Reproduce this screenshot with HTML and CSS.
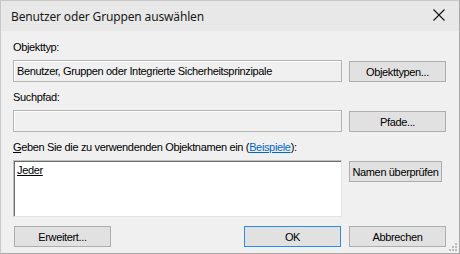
FILE: index.html
```html
<!DOCTYPE html>
<html lang="de">
<head>
    <meta charset="UTF-8">
    <title>Benutzer oder Gruppen auswählen</title>
    <link rel="stylesheet" href="styles.css">
</head>
<body>
    <div class="window">
        <div class="titlebar">
            <span class="title">Benutzer oder Gruppen auswählen</span>
            <button class="close" aria-label="Schließen">
                <svg width="12" height="12" viewBox="0 0 12 12"><path d="M0.5 0.5 L11.5 11.5 M11.5 0.5 L0.5 11.5" stroke="#111" stroke-width="1.1" fill="none"/></svg>
            </button>
        </div>
        <div class="content">
            <div class="label">Objekttyp:</div>
            <div class="row">
                <div class="field">Benutzer, Gruppen oder Integrierte Sicherheitsprinzipale</div>
                <button class="btn">Objekttypen...</button>
            </div>

            <div class="label">Suchpfad:</div>
            <div class="row">
                <div class="field"></div>
                <button class="btn">Pfade...</button>
            </div>

            <div class="label"><u>G</u>eben Sie die zu verwendenden Objektnamen ein (<a href="#" class="link">Beispiele</a>):</div>
            <div class="row top">
                <div class="names"><u>Jeder</u></div>
                <button class="btn narrow">Namen überprüfen</button>
            </div>

            <div class="footer">
                <button class="btn">Erweitert...</button>
                <div class="spacer"></div>
                <button class="btn default">OK</button>
                <button class="btn">Abbrechen</button>
            </div>
        </div>
        <svg class="grip" width="10" height="10" viewBox="0 0 10 10">
            <rect x="7" y="1" width="2" height="2" fill="#bcbcbc"/>
            <rect x="4" y="4" width="2" height="2" fill="#bcbcbc"/>
            <rect x="7" y="4" width="2" height="2" fill="#bcbcbc"/>
            <rect x="1" y="7" width="2" height="2" fill="#bcbcbc"/>
            <rect x="4" y="7" width="2" height="2" fill="#bcbcbc"/>
            <rect x="7" y="7" width="2" height="2" fill="#bcbcbc"/>
        </svg>
    </div>
</body>
</html>
```

FILE: styles.css
```css
body {
    margin: 0;
    padding: 0;
    background: #f0f0f0;
    font-family: "Liberation Sans", Arial, sans-serif;
    font-size: 11px;
    letter-spacing: -0.35px;
    color: #000;
}
.window {
    position: relative;
    width: 460px;
    height: 254px;
    box-sizing: border-box;
    background: #f0f0f0;
    border: 1px solid #c8c8c8;
    border-right-color: #a8a8a8;
    border-bottom-color: #a8a8a8;
}
.titlebar {
    height: 30px;
    background: #e8e8e8;
    display: flex;
    align-items: center;
    justify-content: space-between;
    padding: 0 14px 0 10px;
}
.title {
    font-family: "Noto Sans", sans-serif;
    font-size: 12px;
    letter-spacing: -0.15px;
    color: #1a1a1a;
    padding-top: 1px;
}
.close {
    background: none;
    border: none;
    padding: 0;
    width: 12px;
    height: 12px;
    display: flex;
    margin-top: -2px;
}
.content {
    padding: 10px 13px 0 12px;
}
.label {
    height: 13px;
    line-height: 13px;
    margin-bottom: 6px;
}
.link {
    color: #0066cc;
}
.row {
    display: flex;
    align-items: flex-start;
    gap: 7px;
    margin-bottom: 9px;
}
.field {
    width: 329px;
    height: 22px;
    box-sizing: border-box;
    border: 1px solid #b4b4b4;
    box-shadow: inset 1px 1px 0 #fff;
    padding: 4px 3px 0 3px;
    line-height: 13px;
    white-space: nowrap;
}
.names {
    width: 329px;
    height: 57px;
    box-sizing: border-box;
    background: #fff;
    border: 1px solid #c0c0c0;
    border-right-color: #e4e4e4;
    border-bottom-color: #e4e4e4;
    box-shadow: inset 1px 1px 0 #6b6b6b;
    padding: 3px 3px 0 3px;
    line-height: 13px;
}
.btn {
    width: 97px;
    height: 21px;
    margin-top: 1px;
    box-sizing: border-box;
    background: #e1e1e1;
    border: 1px solid #adadad;
    font-family: "Liberation Sans", Arial, sans-serif;
    font-size: 11px;
    letter-spacing: -0.35px;
    color: #000;
    padding: 0;
    white-space: nowrap;
}
.btn.narrow {
    width: 93px;
}
.btn.default {
    border-color: #2a8ee8;
}
.footer {
    display: flex;
    gap: 8px;
    padding-left: 1px;
}
.footer .btn {
    margin-top: 0;
}
.spacer {
    flex: 1;
}
.grip {
    position: absolute;
    right: 1px;
    bottom: 1px;
}
```
